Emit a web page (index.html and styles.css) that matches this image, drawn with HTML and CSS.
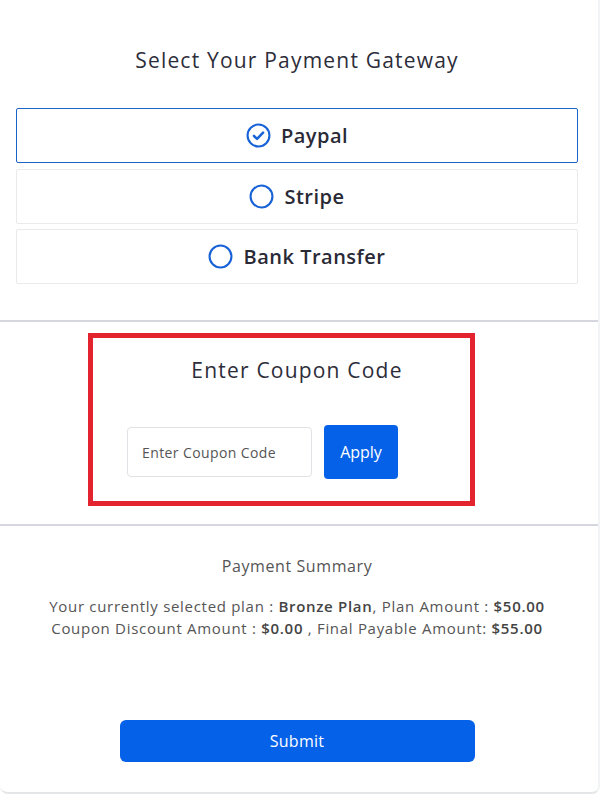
FILE: index.html
```html
<!DOCTYPE html>
<html lang="en">
<head>
    <meta charset="UTF-8">
    <meta name="viewport" content="width=device-width, initial-scale=1.0">
    <title>Payment</title>
    <link rel="stylesheet" href="styles.css">
</head>
<body>
    <div class="card">
        <div class="section gateways">
            <h2 class="title">Select Your Payment Gateway</h2>
            <div class="options">
                <label class="option selected">
                    <svg class="radio" viewBox="0 0 24 24" width="25" height="25">
                        <circle cx="12" cy="12" r="10.5" fill="none" stroke="#1762d6" stroke-width="2"/>
                        <path d="M7.6 12.3l3 3 5.8-6" fill="none" stroke="#1762d6" stroke-width="2.4" stroke-linecap="round" stroke-linejoin="round"/>
                    </svg>
                    <span>Paypal</span>
                </label>
                <label class="option">
                    <svg class="radio" viewBox="0 0 24 24" width="25" height="25">
                        <circle cx="12" cy="12" r="10.5" fill="none" stroke="#1762d6" stroke-width="2"/>
                    </svg>
                    <span>Stripe</span>
                </label>
                <label class="option">
                    <svg class="radio" viewBox="0 0 24 24" width="25" height="25">
                        <circle cx="12" cy="12" r="10.5" fill="none" stroke="#1762d6" stroke-width="2"/>
                    </svg>
                    <span>Bank Transfer</span>
                </label>
            </div>
        </div>

        <div class="section coupon">
            <div class="highlight"></div>
            <h2 class="title">Enter Coupon Code</h2>
            <div class="coupon-row">
                <input type="text" class="coupon-input" placeholder="Enter Coupon Code">
                <button type="button" class="apply-btn">Apply</button>
            </div>
        </div>

        <div class="section summary">
            <h3 class="summary-title">Payment Summary</h3>
            <p class="summary-text">
                Your currently selected plan : <b>Bronze Plan</b>, Plan Amount : <b>$50.00</b><br>
                Coupon Discount Amount : <b>$0.00</b> , Final Payable Amount: <b>$55.00</b>
            </p>
            <button type="button" class="submit-btn">Submit</button>
        </div>
    </div>
</body>
</html>
```

FILE: styles.css
```css
body {
    margin: 0;
    background-color: #fff;
    font-family: "Open Sans", "Liberation Sans", sans-serif;
    color: #2d2d3a;
}

.card {
    width: 598px;
    height: 792px;
    border-bottom: 2px solid #e4e6e8;
    border-right: 2px solid #f2f3f4;
    border-radius: 0 0 8px 8px;
    box-sizing: content-box;
}

.section {
    padding: 0 20px 0 16px;
}

.title {
    margin: 0;
    font-size: 21px;
    font-weight: 400;
    line-height: 30px;
    letter-spacing: 1.2px;
    text-align: center;
    color: #2d2d3a;
}

/* gateways */
.gateways {
    padding-top: 45px;
    padding-bottom: 36px;
}

.options {
    display: flex;
    flex-direction: column;
    gap: 5.5px;
    margin-top: 33px;
}

.option {
    display: flex;
    justify-content: center;
    align-items: center;
    gap: 10px;
    height: 55px;
    border: 1px solid #e9eaec;
    border-radius: 2px;
    box-sizing: border-box;
    font-size: 20px;
    font-weight: 600;
    letter-spacing: 0.5px;
    color: #2a2a36;
}

.option.selected {
    border-color: #1a64c8;
}

.radio {
    flex-shrink: 0;
}

/* coupon */
.coupon {
    position: relative;
    border-top: 2px solid #d6d6df;
    border-bottom: 2px solid #d6d6df;
    padding-top: 33px;
    padding-bottom: 45px;
}

.highlight {
    position: absolute;
    left: 88px;
    top: 11px;
    width: 387px;
    height: 173px;
    border: 5px solid #e3232d;
    box-sizing: border-box;
}

.coupon-row {
    display: flex;
    align-items: center;
    gap: 12px;
    margin-top: 40px;
    padding-left: 111px;
}

.coupon-input {
    width: 185px;
    height: 50px;
    padding: 0 14px;
    border: 1px solid #e2e2e6;
    border-radius: 4px;
    box-sizing: border-box;
    font-family: inherit;
    font-size: 14px;
    letter-spacing: 0.4px;
}

.coupon-input::placeholder {
    color: #555;
}

.apply-btn {
    width: 74px;
    height: 54px;
    border: none;
    border-radius: 4px;
    background-color: #0561e8;
    color: #fff;
    font-family: inherit;
    font-size: 16px;
}

/* summary */
.summary {
    padding-top: 29px;
    text-align: center;
}

.summary-title {
    margin: 0;
    font-size: 16px;
    font-weight: 400;
    line-height: 22px;
    letter-spacing: 0.6px;
    color: #555;
}

.summary-text {
    margin: 18px 0 0;
    font-size: 15px;
    line-height: 22px;
    letter-spacing: 0.7px;
    color: #555;
}

.summary-text b {
    font-weight: 600;
    color: #444;
}

.submit-btn {
    display: block;
    width: 355px;
    height: 42px;
    margin: 81px auto 0;
    border: none;
    border-radius: 6px;
    background-color: #0561e8;
    color: #fff;
    font-family: inherit;
    font-size: 16px;
    letter-spacing: 0.3px;
}
```
